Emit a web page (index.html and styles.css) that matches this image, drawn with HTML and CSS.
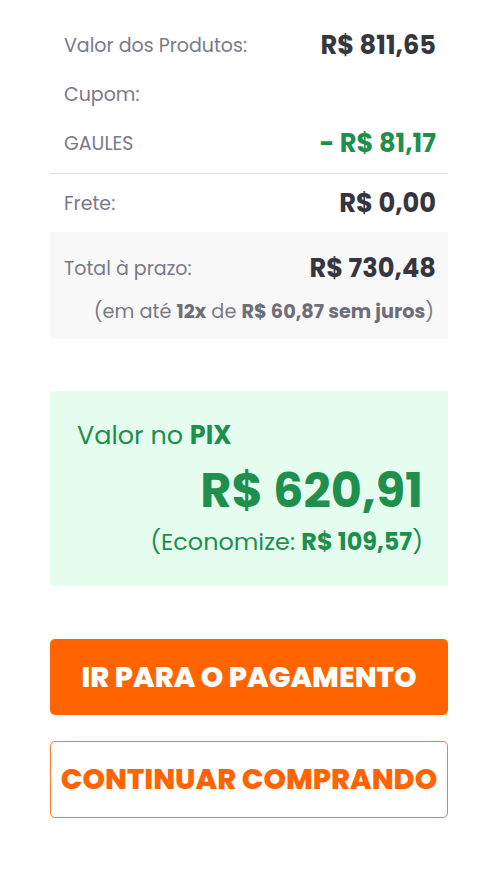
FILE: index.html
```html
<!DOCTYPE html>
<html lang="pt-BR">
<head>
<meta charset="utf-8">
<link rel="stylesheet" href="styles.css">
</head>
<body>
<div class="page">
  <div class="summary">
    <div class="row r1"><span class="label">Valor dos Produtos:</span><span class="value">R$ 811,65</span></div>
    <div class="row r2"><span class="label">Cupom:</span></div>
    <div class="row r3"><span class="label coupon">GAULES</span><span class="value green">- R$ 81,17</span></div>
    <div class="divider"></div>
    <div class="row frete"><span class="label">Frete:</span><span class="value">R$ 0,00</span></div>
    <div class="total-box">
      <div class="row total"><span class="label">Total à prazo:</span><span class="value">R$ 730,48</span></div>
      <div class="installments">(em até <b>12x</b> de <b>R$ 60,87 sem juros</b>)</div>
    </div>
  </div>
  <div class="pix">
    <div class="pix-label">Valor no <b>PIX</b></div>
    <div class="pix-price">R$ 620,91</div>
    <div class="pix-save">(Economize: <b>R$ 109,57</b>)</div>
  </div>
  <div class="actions">
    <button class="btn btn-primary">IR PARA O PAGAMENTO</button>
    <button class="btn btn-outline">CONTINUAR COMPRANDO</button>
  </div>
</div>
</body>
</html>
```
FILE: styles.css
```css
* { box-sizing: border-box; }
html, body { margin: 0; padding: 0; background: #fff; }
body { font-family: "Poppins", "Open Sans", "Noto Sans", sans-serif; }
.page { width: 398px; margin-left: 50px; padding-top: 21px; }
.row { display: flex; justify-content: space-between; align-items: center; padding: 0 12px 0 14px; }
.r1, .r2, .r3 { height: 49px; }
.label { font-size: 19px; color: #7a7a87; }
.coupon { font-size: 19px; }
.value { font-size: 25.7px; font-weight: 700; color: #36363e; }
.value.green { color: #1f8f4e; }
.divider { height: 1px; background: #dedede; margin-top: 5px; }
.frete { height: 58px; }
.total-box { background: #f8f8f8; height: 107px; padding-top: 16px; }
.total { height: 40px; }
.installments { text-align: right; padding-right: 14px; font-size: 19.3px; color: #7a7a87; margin-top: 6px; line-height: 36px; }
.installments b { font-weight: 700; color: #6e6e78; }
.pix { background: #e5fdef; margin-top: 52px; height: 195px; padding: 28px 25px 0 27px; color: #1f8f4e; }
.pix-label { font-size: 25.5px; line-height: 32px; }
.pix-label b { font-weight: 700; }
.pix-price { text-align: right; font-size: 47.8px; font-weight: 700; line-height: 60px; margin-top: 10px; }
.pix-save { text-align: right; font-size: 23.9px; line-height: 34px; margin-top: 4px; }
.pix-save b { font-weight: 700; }
.actions { display: flex; flex-direction: column; gap: 26px; margin-top: 53px; }
.btn { display: block; width: 100%; height: 77px; border-radius: 5px; font-family: inherit; font-size: 28.7px; font-weight: 800; cursor: pointer; padding: 0; }
.btn-primary { background: #ff6400; border: none; color: #fff; height: 76px; }
.btn-outline { background: #fff; border: 1.5px solid #ff7a2e; color: #ff6400; }
```
